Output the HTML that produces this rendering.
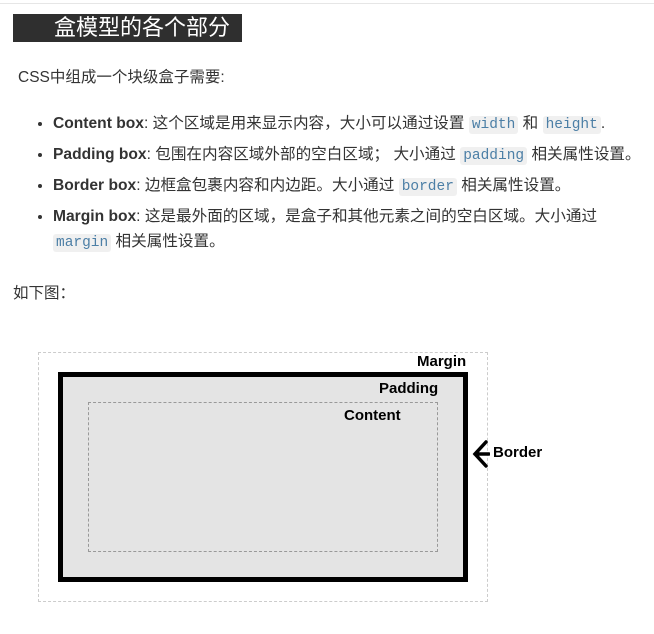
<!DOCTYPE html>
<html><head><meta charset="utf-8"><style>
body{margin:0;width:654px;height:634px;background:#fff;font-family:"Liberation Sans","Noto Sans CJK SC",sans-serif;color:#333;position:relative;overflow:hidden}
.topline{position:absolute;left:0;top:3px;width:654px;height:1px;background:#e6e6e6}
.title{position:absolute;left:13px;top:14px;width:229px;height:28px;background:#2f2f2f;color:#fff;font-size:22px;line-height:28px;padding-left:41px;box-sizing:border-box;white-space:nowrap;overflow:hidden}
.p{position:absolute;font-size:15.5px;white-space:nowrap}
ul{position:absolute;left:0;top:111px;margin:0;padding-left:53px;font-size:15.6px;line-height:25px}
li{margin-bottom:6px;white-space:nowrap;height:25px}
li.last{height:50px}
code{font-family:"Liberation Mono","DejaVu Sans Mono",monospace;font-size:14.5px;line-height:1;color:#4c7fa6;background:#f0f0f0;border-radius:3px;padding:1px 3px}
b{color:#333}
.d{position:absolute;box-sizing:border-box}
.lbl{position:absolute;font-weight:bold;font-size:15px;color:#000;font-family:"Liberation Sans",sans-serif}
</style></head><body>
<div class="topline"></div>
<div class="title">盒模型的各个部分</div>
<div class="p" style="left:18px;top:65px">CSS中组成一个块级盒子需要:</div>
<ul>
<li><b>Content box</b>: 这个区域是用来显示内容，大小可以通过设置 <code>width</code> 和 <code>height</code>.</li>
<li><b>Padding box</b>: 包围在内容区域外部的空白区域； 大小通过 <code>padding</code> 相关属性设置。</li>
<li><b>Border box</b>: 边框盒包裹内容和内边距。大小通过 <code>border</code> 相关属性设置。</li>
<li class="last"><b>Margin box</b>: 这是最外面的区域，是盒子和其他元素之间的空白区域。大小通过<br><code>margin</code> 相关属性设置。</li>
</ul>
<div class="p" style="left:13px;top:281px">如下图：</div>
<div class="d" style="left:38px;top:352px;width:450px;height:250px;border:1px dashed #ccc"></div>
<div class="d" style="left:58px;top:372px;width:410px;height:210px;border:5px solid #000;background:#e4e4e4"></div>
<div class="d" style="left:88px;top:402px;width:350px;height:150px;border:1px dashed #999"></div>
<div class="lbl" style="left:417px;top:353px">Margin</div>
<div class="lbl" style="left:379px;top:380px">Padding</div>
<div class="lbl" style="left:344px;top:407px">Content</div>
<svg style="position:absolute;left:470px;top:440px" width="20" height="28"><path d="M16 2 L5 14 L16 26 M5 14 L19 14" stroke="#000" stroke-width="3.5" fill="none" stroke-linecap="round"/></svg>
<div class="lbl" style="left:493px;top:444px">Border</div>
</body></html>
